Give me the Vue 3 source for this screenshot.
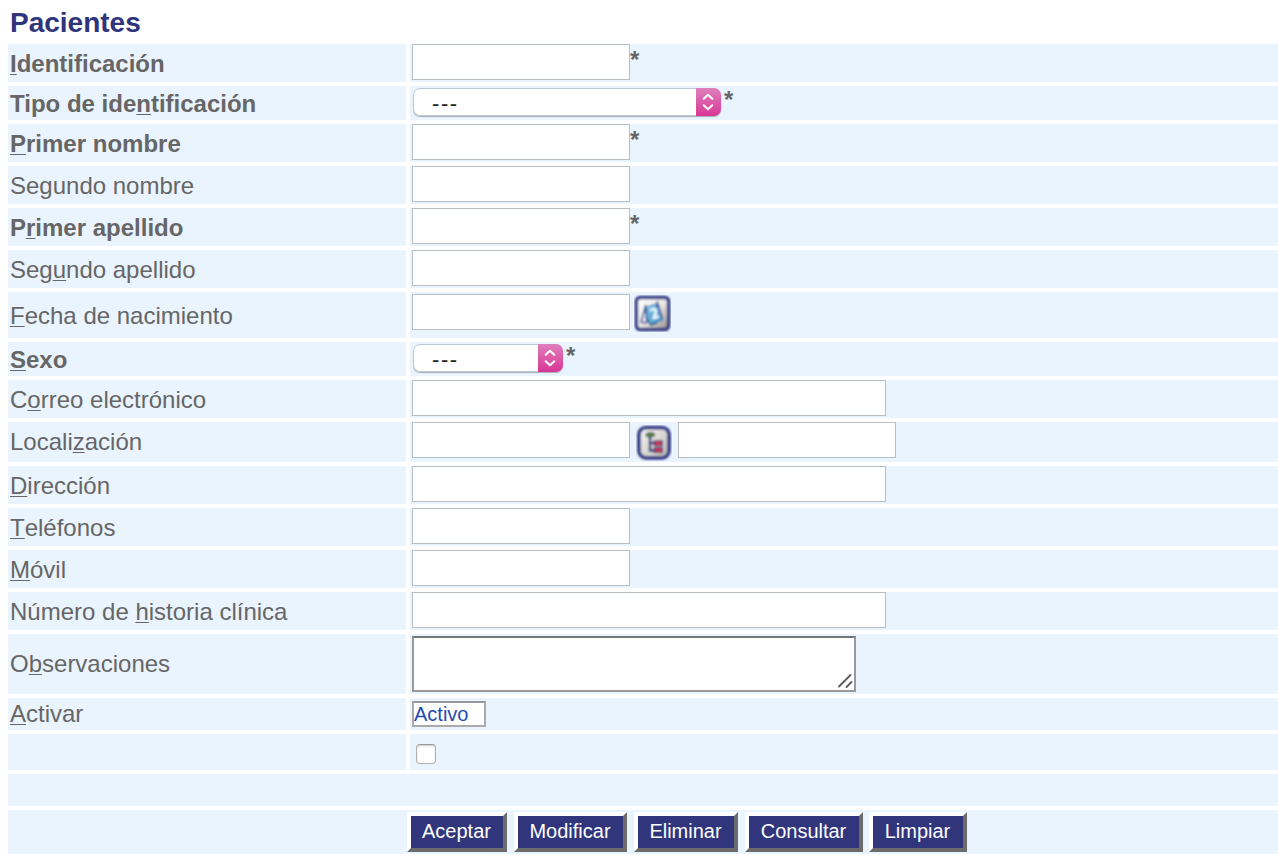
<script setup>
const rows = [
  { pre: '', key: 'I', post: 'dentificación', req: true, h: 38, kind: 'text' },
  { pre: 'Tipo de ide', key: 'n', post: 'tificación', req: true, h: 34, kind: 'select', size: 'large' },
  { pre: '', key: 'P', post: 'rimer nombre', req: true, h: 38, kind: 'text' },
  { pre: 'Segundo nombre', key: '', post: '', h: 38, kind: 'text' },
  { pre: 'P', key: 'r', post: 'imer apellido', req: true, h: 38, kind: 'text' },
  { pre: 'Seg', key: 'u', post: 'ndo apellido', h: 38, kind: 'text' },
  { pre: '', key: 'F', post: 'echa de nacimiento', h: 46, kind: 'date' },
  { pre: '', key: 'S', post: 'exo', req: true, h: 34, kind: 'select', size: 'small' },
  { pre: 'C', key: 'o', post: 'rreo electrónico', h: 38, kind: 'wide' },
  { pre: 'Locali', key: 'z', post: 'ación', h: 40, kind: 'location' },
  { pre: '', key: 'D', post: 'irección', h: 38, kind: 'wide' },
  { pre: '', key: 'T', post: 'eléfonos', h: 38, kind: 'text' },
  { pre: '', key: 'M', post: 'óvil', h: 38, kind: 'text' },
  { pre: 'Número de ', key: 'h', post: 'istoria clínica', h: 38, kind: 'wide' },
  { pre: 'O', key: 'b', post: 'servaciones', h: 60, kind: 'area' },
  { pre: '', key: 'A', post: 'ctivar', h: 32, kind: 'status' },
  { pre: '', key: '', post: '', h: 36, kind: 'check' },
]
const buttons = [
  { t: 'Aceptar', w: 100 },
  { t: 'Modificar', w: 113 },
  { t: 'Eliminar', w: 104 },
  { t: 'Consultar', w: 118 },
  { t: 'Limpiar', w: 98 },
]
</script>

<template>
  <main class="page">
    <h1>Pacientes</h1>
    <form class="form" @submit.prevent>
      <div v-for="(r, i) in rows" :key="i" class="row" :style="{ height: r.h + 'px' }">
        <label class="cell label" :class="[{ bold: r.req }, 'for-' + r.kind]"><span>{{ r.pre }}<span class="key">{{ r.key }}</span>{{ r.post }}</span></label>
        <div class="cell field" :class="r.kind">
          <input v-if="['text', 'date', 'location'].includes(r.kind)" class="box" type="text">
          <input v-else-if="r.kind === 'wide'" class="box long" type="text">
          <div v-else-if="r.kind === 'select'" class="picker" :class="r.size">
            <span class="value">---</span>
            <svg class="knob" viewBox="0 0 25 28" width="25" height="28">
              <path d="M7.700 10.700L12 6.700l4.300 4M7.700 17.300l4.300 4 4.300-4" fill="none" stroke="#fff" stroke-width="2" stroke-linecap="round" stroke-linejoin="round" />
            </svg>
          </div>
          <div v-else-if="r.kind === 'area'" class="notes">
            <svg width="16" height="16" viewBox="0 0 16 16"><path d="M2 13.500L13.500 2M9.500 14l5-5" stroke="#5c5c5c" stroke-width="1.900" stroke-linecap="round" /></svg>
          </div>
          <div v-else-if="r.kind === 'status'" class="active">Activo</div>
          <span v-else-if="r.kind === 'check'" class="tick"></span>

          <svg v-if="r.kind === 'date'" class="cal" width="37" height="37" viewBox="0 0 37 37">
            <defs>
              <linearGradient id="paper" x1="0" y1="0" x2="1" y2="1"><stop offset="0" stop-color="#fff" /><stop offset=".5" stop-color="#eceae6" /><stop offset="1" stop-color="#8f8b84" /></linearGradient>
              <linearGradient id="leaf" x1="0" y1="0" x2="1" y2="1"><stop offset="0" stop-color="#8ccbec" /><stop offset="1" stop-color="#3b8bc0" /></linearGradient>
              <filter id="soft"><feGaussianBlur stdDeviation=".85" /></filter>
            </defs>
            <g filter="url(#soft)">
              <rect x="2.400" y="2.400" width="32.200" height="32.200" rx="4" fill="url(#paper)" stroke="#343b87" stroke-width="3.500" />
              <path d="M11 13L7 27l3 1 5-2z" fill="#e6e8f4" stroke="#4c5598" stroke-width="1.700" />
              <path d="M12 12l12-4 5 17-12 5-5-5z" fill="url(#leaf)" stroke="#568abb" stroke-width="1" />
              <path d="M12 13l1 12 4 5 6-2" fill="none" stroke="#27568f" stroke-width="1.500" />
              <path d="M11 14l1-4M23 12l.5-6M24 9l4 14" fill="none" stroke="#3f4c92" stroke-width="1.500" />
              <path d="M16.500 15.500c3-3 6.500-1 5 2.500l-1.500 5 5-1.500" fill="none" stroke="#f2fbff" stroke-width="2.500" />
            </g>
          </svg>

          <template v-if="r.kind === 'location'">
            <svg class="tree" width="36" height="36" viewBox="0 0 36 36">
              <defs>
                <linearGradient id="stone" x1="0" y1="0" x2="1" y2="1"><stop offset="0" stop-color="#f5f5f4" /><stop offset=".5" stop-color="#dad9d5" /><stop offset="1" stop-color="#b5b3ac" /></linearGradient>
                <filter id="haze"><feGaussianBlur stdDeviation=".85" /></filter>
              </defs>
              <g filter="url(#haze)">
                <rect x="3" y="2.600" width="30" height="30.200" rx="7" fill="url(#stone)" stroke="#343b87" stroke-width="3.800" />
                <path d="M14 11v14.500h5M14 18h5" fill="none" stroke="#343b78" stroke-width="2.400" />
                <path d="M10 10l2-2h5l1.500 2-2 1.500h-5z" fill="#669335" stroke="#46594c" stroke-width="1.500" />
                <rect x="18.500" y="16" width="7.500" height="4.500" fill="#e33254" stroke="#50396e" stroke-width="1.500" />
                <rect x="18.500" y="22.800" width="7.500" height="4.500" fill="#e33254" stroke="#50396e" stroke-width="1.500" />
              </g>
            </svg>
            <input class="box" type="text">
          </template>
          <span v-if="r.req" class="star">*</span>
        </div>
      </div>
      <div class="blank"></div>
      <div class="actions">
        <button v-for="b in buttons" :key="b.t" type="button" :style="{ width: b.w + 'px' }">{{ b.t }}</button>
      </div>
    </form>
  </main>
</template>

<style>
body { background: #fff; overflow: hidden; }
</style>
<style scoped>
* { box-sizing: border-box; }
.page { height: 864px; padding-left: 8px; font-family: "Liberation Sans", Arial, sans-serif; font-size: 24px; color: #666; font-kerning: none; }
h1 { margin: 0; height: 44px; padding: 7px 0 0 2px; font-size: 28px; line-height: 32px; color: #2f347c; }
.form { display: flex; flex-direction: column; gap: 4px; }
.row { display: grid; grid-template-columns: 398px 1fr; gap: 4px; }
.cell { background: #eaf4fe; min-width: 0; }
.label { display: flex; align-items: center; padding: 2px 0 0 2px; white-space: pre; line-height: 28px; }
.label.for-location, .label.for-area, .label.for-status { padding-top: 0; }
.bold { font-weight: bold; font-kerning: normal; }
.key { text-decoration: underline; text-decoration-thickness: 1px; text-underline-offset: 2px; text-decoration-skip-ink: none; }
.field { display: flex; align-items: flex-start; padding-left: 2px; }
.box { width: 218px; height: 36px; margin: 0; padding: 0 4px; border: 1px solid #b7bec4; border-radius: 0; background: #fff; font: inherit; outline: none; flex: none; }
.long { width: 474px; }
.date { padding-top: 2px; }
.cal { margin: 1px 0 0 4px; }
.tree { margin: 3px 6px 0; }
.star { font-weight: bold; line-height: 28px; margin-top: 2px; }
.field.select { padding: 2px 0 0 3px; }
.picker { display: flex; justify-content: space-between; align-items: center; height: 28px; border-radius: 7px; background: #fff; box-shadow: inset 0 0 0 1px #bccbd5, 0 1px 1px #a5adb3; overflow: hidden; }
.large { width: 308px; }
.small { width: 150px; }
.picker + .star { margin: -2px 0 0 3px; }
.value { padding: 4px 0 0 19px; font-size: 22px; line-height: 24px; letter-spacing: 1.600px; color: #222; }
.knob { background: linear-gradient(#df80bd, #d93695); }
.area { padding-top: 2px; }
.notes { width: 444px; height: 56px; border: 2px solid #999; border-top-color: #737579; background: #fff; display: flex; justify-content: flex-end; align-items: flex-end; padding: 0 1px 1px 0; }
.status { padding-top: 3px; }
.active { width: 74px; height: 26px; border: 2px solid #aaa; border-top-color: #999; background: #fff; color: #2549b2; font-size: 20px; line-height: 23px; }
.field.check { padding: 10px 0 0 6px; }
.tick { width: 20px; height: 20px; border: 1px solid #b1b1b1; border-top-color: #999; border-radius: 4px; background: #fff; box-shadow: inset 0 1px 2px #ccc; }
.blank { height: 32px; background: #eaf4fe; }
.actions { height: 44px; padding: 2px 0 0 399px; display: flex; gap: 7px; background: #eaf4fe; }
button { height: 40px; padding: 0 1px 2px 0; border: 4px solid; border-color: #fff #6b6b6b #6b6b6b #fff; background: #30357c; color: #fff; font: 20px "Liberation Sans", Arial, sans-serif; white-space: nowrap; flex: none; }
button:last-child { margin-left: -1px; }
</style>
